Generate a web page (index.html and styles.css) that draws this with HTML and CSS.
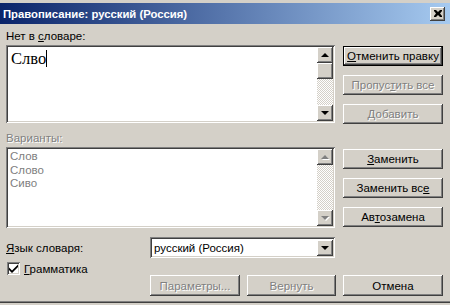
FILE: index.html
```html
<!DOCTYPE html>
<html lang="ru">
<head>
    <meta charset="UTF-8">
    <title>Правописание</title>
    <link rel="stylesheet" href="styles.css">
</head>
<body>
    <div class="window">
        <div class="titlebar">
            <span class="title">Правописание: русский (Россия)</span>
            <div class="close_btn">
                <svg width="8" height="7" viewBox="0 0 8 7"><path d="M0 0h2l2 2 2-2h2v1l-2 2.5 2 2.5v1h-2l-2-2-2 2h-2v-1l2-2.5-2-2.5z" fill="#000"/></svg>
            </div>
        </div>
        <div class="content">
            <div class="label">Нет в <u>с</u>ловаре:</div>
            <div class="pane">
                <div class="field edit_box">
                    <div class="edit_area">
                        <span class="edit_text">Слво</span><span class="caret"></span>
                    </div>
                    <div class="scrollbar">
                        <div class="sb_btn"><span class="tri up"></span></div>
                        <div class="sb_thumb"></div>
                        <div class="sb_track"></div>
                        <div class="sb_btn"><span class="tri down"></span></div>
                    </div>
                </div>
                <div class="btn_col">
                    <div class="btn default"><span><u>О</u>тменить правку</span></div>
                    <div class="btn disabled"><span>Пропус<u>т</u>ить все</span></div>
                    <div class="btn disabled"><span><u>Д</u>обавить</span></div>
                </div>
            </div>
            <div class="label disabled_text second">Варианты:</div>
            <div class="pane">
                <div class="field list_box">
                    <ul class="list">
                        <li>Слов</li>
                        <li>Слово</li>
                        <li>Сиво</li>
                    </ul>
                    <div class="scrollbar">
                        <div class="sb_btn"><span class="tri up off"></span></div>
                        <div class="sb_track"></div>
                        <div class="sb_btn"><span class="tri down off"></span></div>
                    </div>
                </div>
                <div class="btn_col list_btns">
                    <div class="btn"><span><u>З</u>аменить</span></div>
                    <div class="btn"><span>Заменить вс<u>е</u></span></div>
                    <div class="btn"><span>Ав<u>т</u>озамена</span></div>
                </div>
            </div>
            <div class="lang_row">
                <div class="lang_label"><u>Я</u>зык словаря:</div>
                <div class="field combo">
                    <span class="combo_text">русский (Россия)</span>
                    <div class="sb_btn"><span class="tri down"></span></div>
                </div>
            </div>
            <div class="check_row">
                <div class="check_box">
                    <svg width="9" height="9" viewBox="0 0 9 9"><path d="M0 3.5l3 3 6-6v2.5l-6 6-3-3z" fill="#000"/></svg>
                </div>
                <span><u>Г</u>рамматика</span>
            </div>
            <div class="bottom_row">
                <div class="btn disabled w_params"><span>Параметры...</span></div>
                <div class="btn disabled w_back"><span>Вернуть</span></div>
                <div class="btn w_cancel"><span>Отмена</span></div>
            </div>
        </div>
    </div>
</body>
</html>
```

FILE: styles.css
```css
* {
    margin: 0;
    padding: 0;
    box-sizing: border-box;
    list-style: none;
}
body {
    background: #d4d0c8;
    font-family: "Liberation Sans", Arial, sans-serif;
    font-size: 11.5px;
    color: #000;
}
u {
    text-decoration: underline;
    text-underline-offset: 1px;
}
/* окно */
.window {
    width: 450px;
    height: 303px;
    padding-top: 3px;
    background: #d4d0c8;
    border-bottom: 1px solid #404040;
    box-shadow: inset 0 -1px #808080;
    overflow: hidden;
}
.titlebar {
    display: flex;
    align-items: center;
    height: 21px;
    padding: 0 5px 0 3px;
    background: linear-gradient(to right, #0a246a, #a6caf0);
}
.title {
    color: #fff;
    font-weight: bold;
    font-size: 11.3px;
}
.close_btn {
    display: flex;
    align-items: center;
    justify-content: center;
    width: 15px;
    height: 14px;
    margin-left: auto;
    background: #d4d0c8;
    box-shadow: inset -1px -1px #404040, inset 1px 1px #fff, inset -2px -2px #808080;
}
.content {
    padding: 6px 7px 0 6px;
}
.label {
    height: 13px;
    line-height: 13px;
    margin-bottom: 2px;
}
.label.second {
    margin-top: 8px;
}
.disabled_text,
.disabled span {
    color: #808080;
    text-shadow: 1px 1px #fff;
}
.pane {
    display: flex;
    gap: 8px;
}
/* вдавленные поля */
.field {
    display: flex;
    padding: 2px;
    background: #fff;
    box-shadow: inset 1px 1px #808080, inset -1px -1px #fff, inset 2px 2px #404040, inset -2px -2px #d4d0c8;
}
.edit_box {
    width: 329px;
    height: 78px;
}
.edit_area {
    flex: 1;
    display: flex;
    align-items: flex-start;
    padding: 3px 0 0 3px;
}
.edit_text {
    font-family: "Liberation Serif", "Times New Roman", serif;
    font-size: 16.5px;
    line-height: 17px;
}
.caret {
    width: 1px;
    height: 17px;
    background: #000;
}
.list_box {
    width: 329px;
    height: 81px;
}
.list {
    flex: 1;
    padding: 1px 0 0 2px;
    color: #808080;
    line-height: 13.5px;
}
/* полоса прокрутки */
.scrollbar {
    display: flex;
    flex-direction: column;
    width: 16px;
}
.sb_btn {
    display: flex;
    align-items: center;
    justify-content: center;
    width: 16px;
    height: 16px;
    flex-shrink: 0;
    background: #d4d0c8;
    box-shadow: inset -1px -1px #404040, inset 1px 1px #fff, inset -2px -2px #808080;
}
.sb_thumb {
    height: 16px;
    background: #d4d0c8;
    box-shadow: inset -1px -1px #404040, inset 1px 1px #fff, inset -2px -2px #808080;
}
.sb_track {
    flex: 1;
    background: repeating-conic-gradient(#fff 0 25%, #d4d0c8 0 50%) 0 0 / 2px 2px;
}
.tri {
    width: 0;
    height: 0;
    border-left: 4px solid transparent;
    border-right: 4px solid transparent;
}
.tri.up {
    border-bottom: 4px solid #000;
}
.tri.down {
    border-top: 4px solid #000;
}
.tri.up.off {
    border-bottom-color: #808080;
    filter: drop-shadow(1px 1px 0 #fff);
}
.tri.down.off {
    border-top-color: #808080;
    filter: drop-shadow(1px 1px 0 #fff);
}
/* кнопки */
.btn_col {
    display: flex;
    flex-direction: column;
    gap: 9px;
    padding-top: 1px;
}
.list_btns {
    padding-top: 2px;
}
.btn {
    display: flex;
    align-items: center;
    justify-content: center;
    width: 100px;
    height: 20px;
    background: #d4d0c8;
    box-shadow: inset -1px -1px #404040, inset 1px 1px #fff, inset -2px -2px #808080;
}
.btn.default {
    border: 1px solid #000;
}
.lang_row {
    display: flex;
    align-items: center;
    margin-top: 9px;
}
.lang_label {
    width: 144px;
}
.combo {
    align-items: center;
    width: 185px;
    height: 21px;
}
.combo_text {
    flex: 1;
    padding-left: 2px;
}
.check_row {
    display: flex;
    align-items: center;
    gap: 4px;
    height: 13px;
    margin-top: 4px;
    padding-left: 1px;
}
.check_box {
    display: flex;
    align-items: center;
    justify-content: center;
    width: 13px;
    height: 13px;
    background: #fff;
    box-shadow: inset 1px 1px #808080, inset -1px -1px #fff, inset 2px 2px #404040, inset -2px -2px #d4d0c8;
}
.bottom_row {
    display: flex;
    gap: 7px;
    padding-left: 144px;
}
.bottom_row .btn {
    height: 21px;
}
.w_params {
    width: 90px;
}
.w_back {
    width: 89px;
}
.w_cancel {
    width: 100px;
}
```
